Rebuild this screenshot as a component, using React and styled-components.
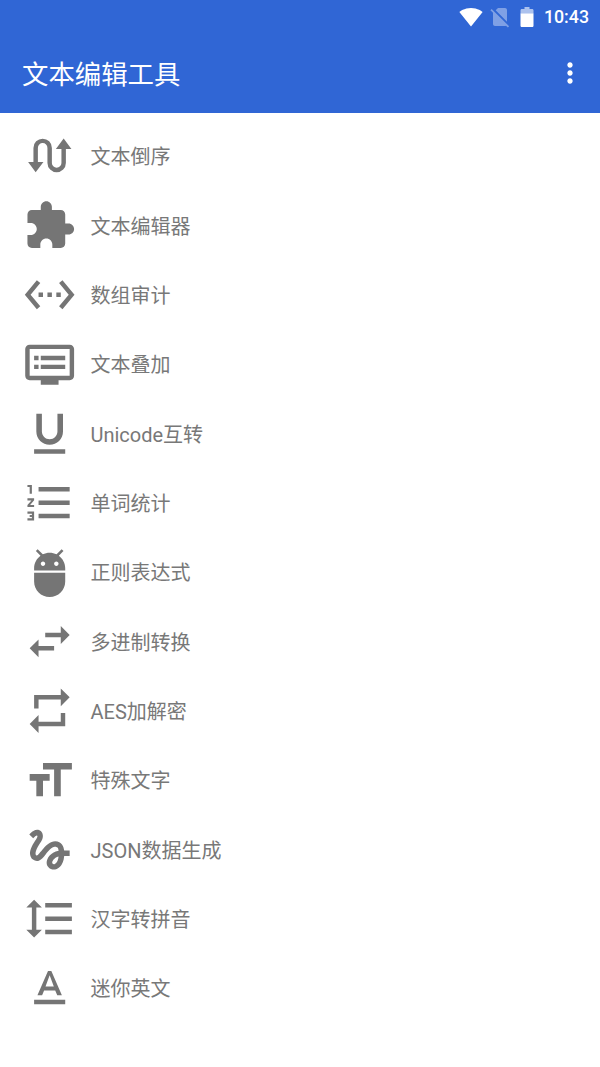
import React from 'react'
import styled, { createGlobalStyle } from 'styled-components'

const tools = [
  { name: '文本倒序', icon: 'reverse' },
  { name: '文本编辑器', icon: 'M20.5 11H19V7c0-1.1-.9-2-2-2h-4V3.5C13 2.12 11.88 1 10.5 1S8 2.12 8 3.5V5H4c-1.1 0-1.99.9-1.99 2v3.8H3.5c1.49 0 2.7 1.21 2.7 2.7s-1.21 2.7-2.7 2.7H2V20c0 1.1.9 2 2 2h3.8v-1.5c0-1.49 1.21-2.7 2.7-2.7 1.49 0 2.7 1.21 2.7 2.7V22H17c1.1 0 2-.9 2-2v-4h1.5c1.38 0 2.5-1.12 2.5-2.5S21.88 11 20.5 11z' },
  { name: '数组审计', icon: 'M7.77 6.76L6.23 5.48.82 12l5.41 6.52 1.54-1.28L3.42 12l4.35-5.24zM7 13h2v-2H7v2zm10-2h-2v2h2v-2zm-6 2h2v-2h-2v2zm6.77-7.52l-1.54 1.28L20.58 12l-4.35 5.24 1.54 1.28L23.18 12l-5.41-6.52z' },
  { name: '文本叠加', icon: 'M21 3H3c-1.1 0-2 .9-2 2v12c0 1.1.9 2 2 2h5v2h8v-2h5c1.1 0 1.99-.9 1.99-2L23 5c0-1.1-.9-2-2-2zm0 14H3V5h18v12zm-2-9H8v2h11V8zm0 4H8v2h11v-2zM7 8H5v2h2V8zm0 4H5v2h2v-2z' },
  { name: 'Unicode互转', icon: 'M12 17c3.31 0 6-2.69 6-6V3h-2.5v8c0 1.93-1.57 3.5-3.5 3.5S8.5 12.93 8.5 11V3H6v8c0 3.31 2.69 6 6 6zm-7 2v2h14v-2H5z' },
  { name: '单词统计', icon: 'M2 17h2v.5H3v1h1v.5H2v1h3v-4H2v1zm1-9h1V4H2v1h1v3zm-1 3h1.8L2 13.1v.9h3v-1H3.2L5 10.9V10H2v1zm5-6v2h14V5H7zm0 14h14v-2H7v2zm0-6h14v-2H7v2z' },
  { name: '正则表达式', icon: 'M5 16c0 3.87 3.13 7 7 7s7-3.13 7-7v-4H5v4zM16.12 4.37l2.1-2.1-.82-.83-2.3 2.31C14.16 3.28 13.12 3 12 3s-2.16.28-3.09.75L6.6 1.44l-.82.83 2.1 2.1C6.14 5.64 5 7.68 5 10v1h14v-1c0-2.32-1.14-4.36-2.88-5.63zM9 9c-.55 0-1-.45-1-1s.45-1 1-1 1 .45 1 1-.45 1-1 1zm6 0c-.55 0-1-.45-1-1s.45-1 1-1 1 .45 1 1-.45 1-1 1z' },
  { name: '多进制转换', icon: 'M6.99 11L3 15l3.99 4v-3H14v-2H6.99v-3zM21 9l-4-4v3h-7v2h7v3l4-4z' },
  { name: 'AES加解密', icon: 'M7 7h10v3l4-4-4-4v3H5v6h2V7zm10 10H7v-3l-4 4 4 4v-3h12v-6h-2v4z' },
  { name: '特殊文字', icon: 'M9 4v3h5v12h3V7h5V4H9zm-6 8h3v7h3v-7h3V9H3v3z' },
  { name: 'JSON数据生成', icon: 'M4.59 6.89c.7-.71 1.4-1.35 1.71-1.22.5.2 0 1.03-.3 1.52-.25.42-2.86 3.89-2.86 6.31 0 1.28.48 2.34 1.34 2.98.75.56 1.74.73 2.64.46 1.07-.31 1.95-1.4 3.06-2.77 1.21-1.49 2.83-3.44 4.08-3.44 1.63 0 1.65 1.01 1.76 1.79-3.78.64-5.38 3.67-5.38 5.37 0 1.7 1.44 3.09 3.21 3.09 1.63 0 4.29-1.33 4.69-6.1H21v-2.5h-2.47c-.15-1.65-1.09-4.2-4.03-4.2-2.25 0-4.18 1.91-4.94 2.84-.58.73-2.06 2.48-2.29 2.72-.25.3-.68.84-1.11.84-.45 0-.72-.83-.36-1.92.35-1.09 1.4-2.86 1.85-3.52.78-1.14 1.3-1.92 1.3-3.28C8.95 3.69 7.31 3 6.44 3 5.12 3 3.97 4 3.72 4.25c-.36.36-.66.66-.88.93l1.75 1.71zm9.29 11.66c-.31 0-.74-.26-.74-.72 0-.6.73-2.2 2.87-2.76-.3 2.69-1.43 3.48-2.13 3.48z' },
  { name: '汉字转拼音', icon: 'M6 7h2.5L5 3.5 1.5 7H4v10H1.5L5 20.5 8.5 17H6V7zm4-2v2h12V5H10zm0 14h12v-2H10v2zm0-6h12v-2H10v2z' },
  { name: '迷你英文', icon: 'M5 17v2h14v-2H5zm4.5-4.2h5l.9 2.2h2.1L12.75 4h-1.5L6.5 15h2.1l.9-2.2zM12 5.98L13.87 11h-3.74L12 5.98z' },
]

export default function App() {
  return (
    <Page>
      <GlobalStyle />
      <Header>
        <StatusBar>
          <StatusIcon viewBox="0 0 24 24">
            <path d="M12.01 21.49L23.64 7c-.45-.34-4.93-4-11.64-4C5.28 3 .81 6.66.36 7l11.63 14.49.01.01.01-.01z" />
          </StatusIcon>
          <StatusIcon viewBox="0 0 24 24" $gap={5} $faded>
            <path d="M18.99 5c0-1.1-.89-2-1.99-2h-7L7.66 5.34 19 16.68 18.99 5zM3.65 3.88L2.38 5.15 5 7.77V19c0 1.1.9 2 2 2h10.01c.35 0 .67-.1.96-.26l1.88 1.88 1.27-1.27L3.65 3.88z" />
          </StatusIcon>
          <StatusIcon viewBox="0 0 24 24" $gap={3}>
            <path fillOpacity=".6" d="M18.5 5.33C18.5 4.6 17.9 4 17.17 4H14.5V2h-5v2H6.83C6.1 4 5.5 4.6 5.5 5.33V8.2h13V5.33z" />
            <path d="M5.5 8.2v12.47c0 .73.6 1.33 1.33 1.33h10.34c.73 0 1.33-.6 1.33-1.33V8.2h-13z" />
          </StatusIcon>
          <Clock>10:43</Clock>
        </StatusBar>
        <Toolbar>
          <Title>文本编辑工具</Title>
          <MoreIcon viewBox="0 0 24 24">
            <path d="M12 8c1.1 0 2-.9 2-2s-.9-2-2-2-2 .9-2 2 .9 2 2 2zm0 2c-1.1 0-2 .9-2 2s.9 2 2 2 2-.9 2-2-.9-2-2-2zm0 6c-1.1 0-2 .9-2 2s.9 2 2 2 2-.9 2-2-.9-2-2-2z" />
          </MoreIcon>
        </Toolbar>
      </Header>
      <List>
        {tools.map((tool) => (
          <Row key={tool.name}>
            <ToolIcon viewBox="0 0 24 24">
              {tool.icon === 'reverse' ? (
                <>
                  <path
                    d="M5.7 15V8.05a3.15 3.15 0 0 1 6.3 0V14.85a3.15 3.15 0 0 0 6.3 0V8"
                    fill="none"
                    stroke="currentColor"
                    strokeWidth="2"
                  />
                  <path d="M2.3 14.4h6.9L5.7 19zM14.8 8.5h7L18.3 3.8z" />
                </>
              ) : (
                <path d={tool.icon} />
              )}
            </ToolIcon>
            <Label>{tool.name}</Label>
          </Row>
        ))}
      </List>
    </Page>
  )
}

const GlobalStyle = createGlobalStyle`
  html, body {
    margin: 0;
    padding: 0;
    background: #fff;
  }
`

const Page = styled.div`
  width: 600px;
  height: 1067px;
  overflow: hidden;
  background: #fff;
  font-family: Roboto, "Noto Sans CJK SC", sans-serif;
`

const Header = styled.header`
  height: 113px;
  background: #3066d5;
  color: #fff;
`

const StatusBar = styled.div`
  height: 33px;
  display: flex;
  align-items: center;
  justify-content: flex-end;
  padding-right: 11px;
`

const StatusIcon = styled.svg`
  width: 24px;
  height: 24px;
  margin-left: ${(props) => props.$gap || 0}px;
  fill: #fff;
  opacity: ${(props) => (props.$faded ? 0.38 : 1)};
`

const Clock = styled.span`
  margin-left: 4.5px;
  font-size: 17.8px;
  font-weight: 500;
`

const Toolbar = styled.div`
  height: 80px;
  display: flex;
  align-items: center;
  justify-content: space-between;
  padding: 0 14px 0 22px;
`

const Title = styled.h1`
  margin: 0 0 2px;
  font-size: 26.4px;
  font-weight: 400;
`

const MoreIcon = styled.svg`
  width: 32px;
  height: 32px;
  fill: #fff;
`

const List = styled.div`
  padding-top: 8.67px;
`

const Row = styled.div`
  height: 69.33px;
  display: flex;
  align-items: center;
  padding-left: 22.67px;
  gap: 14.5px;
`

const ToolIcon = styled.svg`
  width: 53.33px;
  height: 53.33px;
  flex-shrink: 0;
  fill: #757575;
  color: #757575;
`

const Label = styled.span`
  padding-bottom: 1px;
  font-size: 20px;
  color: #787878;
`
